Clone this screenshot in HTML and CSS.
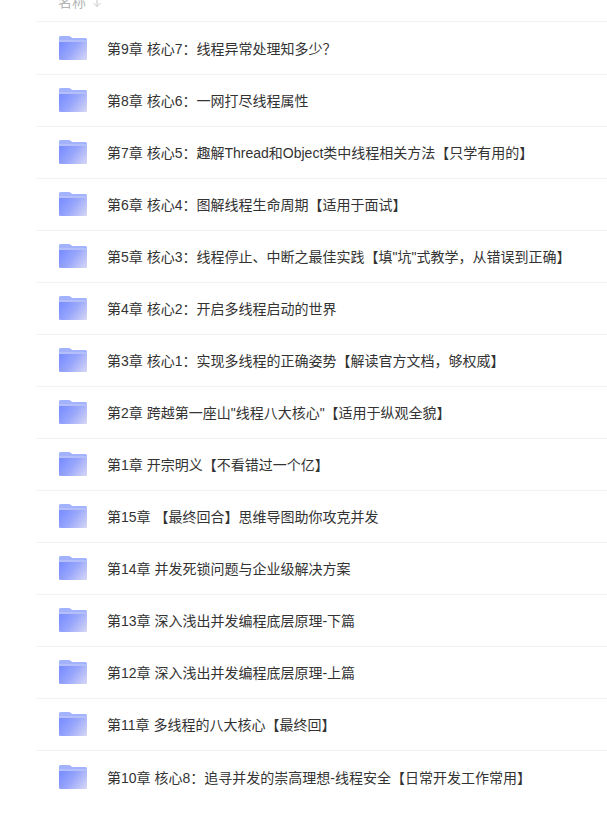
FILE: index.html
```html
<!DOCTYPE html>
<html lang="zh">
<head>
<meta charset="utf-8">
<title>文件列表</title>
<link rel="stylesheet" href="styles.css">
</head>
<body>
<svg class="defs" width="0" height="0" aria-hidden="true">
  <defs>
    <linearGradient id="fg" x1="0" y1="0.3" x2="1" y2="0.8">
      <stop offset="0" stop-color="#7c90ff"/>
      <stop offset="0.45" stop-color="#98a6fb"/>
      <stop offset="1" stop-color="#d0d2f5"/>
    </linearGradient>
    <symbol id="folder" viewBox="0 0 28 24">
      <path d="M1.5 0H9.5Q11 0 12 1L13 2H26.5Q28 2 28 3.5V8H0V1.5Q0 0 1.5 0Z" fill="#a3b2fd"/>
      <path d="M0 4H28V6H0Z" fill="#b4c0fb"/>
      <path d="M0 6H28V22.5Q28 24 26.5 24H1.5Q0 24 0 22.5Z" fill="url(#fg)"/>
    </symbol>
  </defs>
</svg>
<main class="list">
  <div class="head"><span class="head-label">名称</span><svg class="head-arrow" viewBox="0 0 8 10"><path d="M4 0V7.5M0.5 4L4 7.5L7.5 4"/></svg></div>
  <div class="row"><svg class="folder"><use href="#folder"/></svg><span class="name">第9章 核心7：线程异常处理知多少？</span></div>
  <div class="row"><svg class="folder"><use href="#folder"/></svg><span class="name">第8章 核心6：一网打尽线程属性</span></div>
  <div class="row"><svg class="folder"><use href="#folder"/></svg><span class="name">第7章 核心5：趣解Thread和Object类中线程相关方法【只学有用的】</span></div>
  <div class="row"><svg class="folder"><use href="#folder"/></svg><span class="name">第6章 核心4：图解线程生命周期【适用于面试】</span></div>
  <div class="row"><svg class="folder"><use href="#folder"/></svg><span class="name">第5章 核心3：线程停止、中断之最佳实践【填"坑"式教学，从错误到正确】</span></div>
  <div class="row"><svg class="folder"><use href="#folder"/></svg><span class="name">第4章 核心2：开启多线程启动的世界</span></div>
  <div class="row"><svg class="folder"><use href="#folder"/></svg><span class="name">第3章 核心1：实现多线程的正确姿势【解读官方文档，够权威】</span></div>
  <div class="row"><svg class="folder"><use href="#folder"/></svg><span class="name">第2章 跨越第一座山"线程八大核心"【适用于纵观全貌】</span></div>
  <div class="row"><svg class="folder"><use href="#folder"/></svg><span class="name">第1章 开宗明义【不看错过一个亿】</span></div>
  <div class="row"><svg class="folder"><use href="#folder"/></svg><span class="name">第15章 【最终回合】思维导图助你攻克并发</span></div>
  <div class="row"><svg class="folder"><use href="#folder"/></svg><span class="name">第14章 并发死锁问题与企业级解决方案</span></div>
  <div class="row"><svg class="folder"><use href="#folder"/></svg><span class="name">第13章 深入浅出并发编程底层原理-下篇</span></div>
  <div class="row"><svg class="folder"><use href="#folder"/></svg><span class="name">第12章 深入浅出并发编程底层原理-上篇</span></div>
  <div class="row"><svg class="folder"><use href="#folder"/></svg><span class="name">第11章 多线程的八大核心【最终回】</span></div>
  <div class="row"><svg class="folder"><use href="#folder"/></svg><span class="name">第10章 核心8：追寻并发的崇高理想-线程安全【日常开发工作常用】</span></div>
</main>
</body>
</html>
```
FILE: styles.css
```css
html, body {
  margin: 0;
  padding: 0;
  background: #fff;
}
body {
  height: 823px;
  overflow: hidden;
  font-family: "Liberation Sans", "Noto Sans CJK SC", sans-serif;
}
.defs {
  display: block;
  height: 0;
}
.list {
  margin-left: 36px;
}
.head {
  height: 22px;
  box-sizing: border-box;
  margin-bottom: 1px;
  padding-left: 22px;
  border-bottom: 1px solid #f3f3f3;
  overflow: hidden;
  display: flex;
  gap: 7px;
  align-items: flex-start;
  color: #b4b4b4;
  font-size: 14px;
  line-height: 14px;
}
.head-label {
  margin-top: -5px;
}
.head-arrow {
  width: 8px;
  height: 10px;
  margin-top: -1px;
  fill: none;
  stroke: #c8c8c8;
  stroke-width: 1;
}
.row {
  height: 52px;
  box-sizing: border-box;
  border-bottom: 1px solid #f3f3f3;
  padding-left: 23px;
  padding-bottom: 1px;
  display: flex;
  align-items: center;
}
.row:last-child {
  border-bottom: 0;
}
.folder {
  width: 28px;
  height: 24px;
  flex: none;
  margin-right: 20px;
}
.name {
  margin-top: 2px;
  font-size: 14px;
  line-height: 20px;
  color: #333;
  white-space: nowrap;
}
```
